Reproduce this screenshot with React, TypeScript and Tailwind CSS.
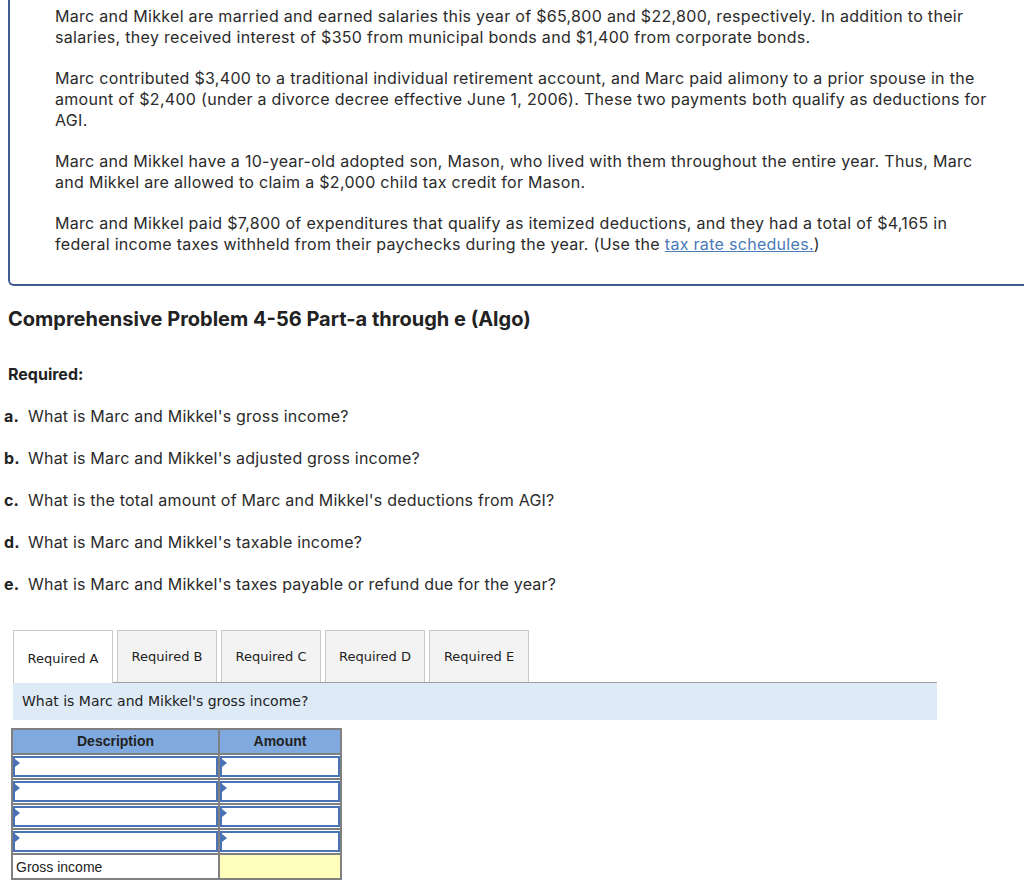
import React from "react";

const tabs = ["Required A", "Required B", "Required C", "Required D", "Required E"];

const questions = [
  { letter: "a.", text: "What is Marc and Mikkel's gross income?" },
  { letter: "b.", text: "What is Marc and Mikkel's adjusted gross income?" },
  { letter: "c.", text: "What is the total amount of Marc and Mikkel's deductions from AGI?" },
  { letter: "d.", text: "What is Marc and Mikkel's taxable income?" },
  { letter: "e.", text: "What is Marc and Mikkel's taxes payable or refund due for the year?" },
];

function InputCell() {
  return (
    <td className="p-0 border-2 border-[#808080] h-[25px]">
      <div className="relative h-[21px] bg-white border-2 border-[#4a73b5]">
        <span className="absolute left-0 top-[1px] w-0 h-0 border-y-[4px] border-y-transparent border-l-[5px] border-l-[#4a73b5]" />
      </div>
    </td>
  );
}

export default function App() {
  return (
    <div className="bg-white text-[#2b2b2b] font-['Inter',sans-serif] min-h-[881px]">
      {/* Problem statement box */}
      <div className="ml-[8px] border-l-2 border-b-2 border-[#3f5e8f] rounded-bl-[6px] pl-[45px] pr-[20px] pt-[6px] pb-[29px] text-[16px] leading-[21px] tracking-[0.3px] whitespace-nowrap">
        <p className="mb-[20px]">
          Marc and Mikkel are married and earned salaries this year of $65,800 and $22,800, respectively. In addition to their
          <br />
          salaries, they received interest of $350 from municipal bonds and $1,400 from corporate bonds.
        </p>
        <p className="mb-[20px]">
          Marc contributed $3,400 to a traditional individual retirement account, and Marc paid alimony to a prior spouse in the
          <br />
          amount of $2,400 (under a divorce decree effective June 1, 2006). These two payments both qualify as deductions for
          <br />
          AGI.
        </p>
        <p className="mb-[20px]">
          Marc and Mikkel have a 10-year-old adopted son, Mason, who lived with them throughout the entire year. Thus, Marc
          <br />
          and Mikkel are allowed to claim a $2,000 child tax credit for Mason.
        </p>
        <p>
          Marc and Mikkel paid $7,800 of expenditures that qualify as itemized deductions, and they had a total of $4,165 in
          <br />
          federal income taxes withheld from their paychecks during the year. (Use the{" "}
          <a className="text-[#4a7ab8] underline">tax rate schedules.</a>)
        </p>
      </div>

      <h2 className="ml-[8px] mt-[19px] text-[20px] font-bold leading-[28px] text-[#222]">
        Comprehensive Problem 4-56 Part-a through e (Algo)
      </h2>

      <div className="ml-[8px] mt-[30px] text-[16px] font-bold leading-[22px] text-[#222]">Required:</div>

      <div className="mt-[20px] flex flex-col gap-[20px] text-[16px] leading-[22px] tracking-[0.2px]">
        {questions.map((q) => (
          <div key={q.letter} className="flex">
            <span className="w-[28px] pl-[4px] font-bold text-[#222]">{q.letter}</span>
            <span>{q.text}</span>
          </div>
        ))}
      </div>

      {/* Tabs */}
      <div className="ml-[13px] mt-[35px] w-[924px] font-['DejaVu_Sans',Verdana,sans-serif]">
        <div className="flex items-end gap-[4px] text-[13px] text-[#222]">
          {tabs.map((t, i) =>
            i === 0 ? (
              <div
                key={t}
                className="w-[100px] h-[53px] bg-white border border-b-0 border-[#c8c8c8] flex items-center justify-center pt-[3px] -mb-px relative z-10"
              >
                {t}
              </div>
            ) : (
              <div
                key={t}
                className="w-[100px] h-[52px] bg-[#f3f3f3] border border-b-0 border-[#c8c8c8] flex items-center justify-center"
              >
                {t}
              </div>
            )
          )}
        </div>
        <div className="border-t border-[#a0a0a0] bg-[#deebf7] h-[38px] flex items-center pl-[9px] text-[14px] text-[#222]">
          What is Marc and Mikkel's gross income?
        </div>
      </div>

      {/* Table */}
      <table className="ml-[11px] mt-[8px] border-collapse font-['Liberation_Sans',Arial,sans-serif] text-[14px] text-[#222]">
        <thead>
          <tr>
            <th className="w-[207px] h-[25px] p-0 bg-[#80aadf] border-2 border-[#808080] font-bold">Description</th>
            <th className="w-[122px] h-[25px] p-0 bg-[#80aadf] border-2 border-[#808080] font-bold">Amount</th>
          </tr>
        </thead>
        <tbody>
          {[0, 1, 2, 3].map((r) => (
            <tr key={r}>
              <InputCell />
              <InputCell />
            </tr>
          ))}
          <tr>
            <td className="h-[25px] p-0 pl-[3px] pt-[2px] bg-white border-2 border-[#808080] align-middle">Gross income</td>
            <td className="h-[25px] p-0 bg-[#ffffbb] border-2 border-[#808080]" />
          </tr>
        </tbody>
      </table>
    </div>
  );
}
